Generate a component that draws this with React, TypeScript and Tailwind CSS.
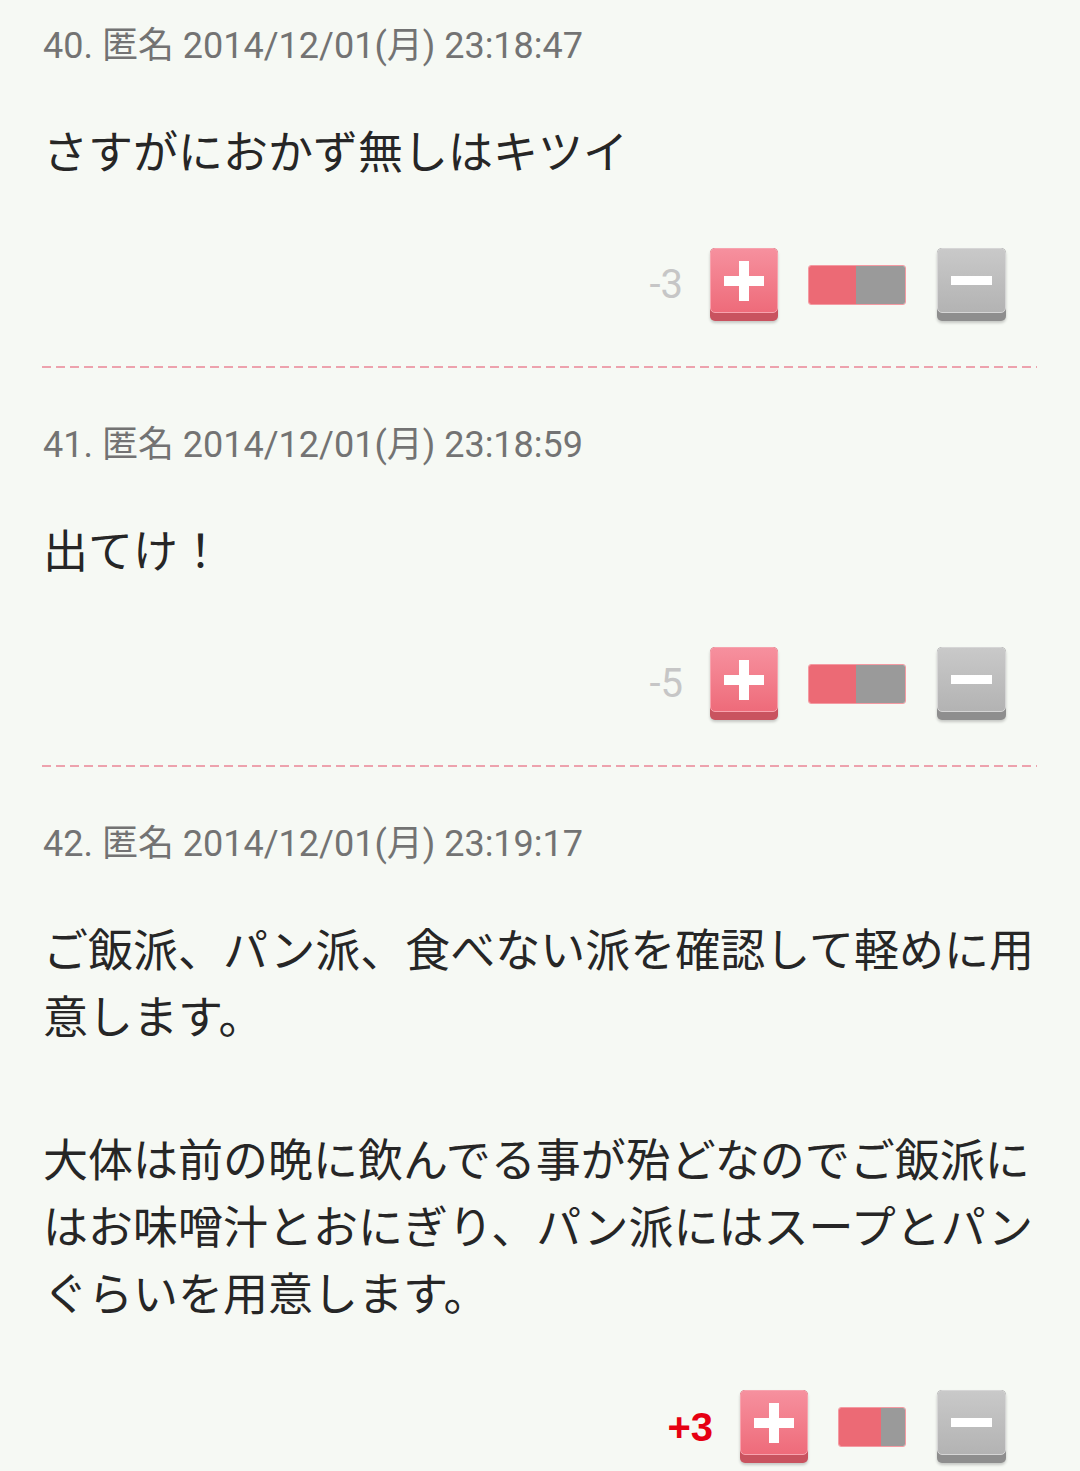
const posts = [
  {
    no: 40,
    time: "2014/12/01(月) 23:18:47",
    body: ["さすがにおかず無しはキツイ"],
    score: "-3",
    plus: false,
  },
  {
    no: 41,
    time: "2014/12/01(月) 23:18:59",
    body: ["出てけ！"],
    score: "-5",
    plus: false,
  },
  {
    no: 42,
    time: "2014/12/01(月) 23:19:17",
    body: [
      "ご飯派、パン派、食べない派を確認して軽めに用意します。",
      "大体は前の晩に飲んでる事が殆どなのでご飯派にはお味噌汁とおにぎり、パン派にはスープとパンぐらいを用意します。",
    ],
    score: "+3",
    plus: true,
  },
];

const PlusButton = () => (
  <div className="w-[68px] h-[73px] rounded-[5px] bg-[#c9535f] pb-[8px] shadow-[0_2px_3px_rgba(0,0,0,0.2)]">
    <div className="h-full rounded-[5px] border border-[#f7a3ae] bg-gradient-to-b from-[#f6909e] to-[#ee6b7a] flex items-center justify-center">
      <svg width="40" height="40" viewBox="0 0 40 40">
        <rect x="0" y="15" width="40" height="10" fill="#fff" />
        <rect x="15" y="0" width="10" height="40" fill="#fff" />
      </svg>
    </div>
  </div>
);

const MinusButton = () => (
  <div className="w-[69px] h-[73px] rounded-[5px] bg-[#8e8e8e] pb-[8px] shadow-[0_2px_3px_rgba(0,0,0,0.2)]">
    <div className="h-full rounded-[5px] border border-[#d6d6d6] bg-gradient-to-b from-[#c9c9c9] to-[#b3b3b3] flex items-center justify-center">
      <svg width="41" height="10" viewBox="0 0 41 10">
        <rect x="0" y="0" width="41" height="9" fill="#fff" />
      </svg>
    </div>
  </div>
);

const Post = ({ p, last }: { p: (typeof posts)[number]; last: boolean }) => (
  <div className={last ? "" : "pb-[57px]"}>
    <div className="h-[40px] leading-[40px] text-[36px] text-[#737373] font-['Roboto','Noto_Sans_CJK_JP',sans-serif]">
      {p.no}. 匿名 {p.time}
    </div>
    <div className="mt-[50px] text-[45px] leading-[67px] text-[#262626] font-['Noto_Sans_CJK_JP',sans-serif]">
      {p.body.map((t, i) => (
        <p key={i} className={i > 0 ? "mt-[76px]" : ""}>
          {t}
        </p>
      ))}
    </div>
    <div className="mt-[65px] flex items-center justify-end pr-[31px]">
      {p.plus ? (
        <span className="mr-[27px] text-[40px] font-bold text-[#e60012] font-['Liberation_Sans',sans-serif]">
          {p.score}
        </span>
      ) : (
        <span className="mr-[27px] text-[40px] font-normal text-[#c6c6c6] font-['Roboto',sans-serif]">
          {p.score}
        </span>
      )}
      <PlusButton />
      <div
        className={
          "ml-[30px] mr-[31px] h-[40px] flex rounded-[3px] overflow-hidden border border-[#f49aa2] " +
          (p.plus ? "w-[68px]" : "w-[98px]")
        }
      >
        <div className={"h-full bg-[#ec6a75] " + (p.plus ? "w-[42px]" : "w-[47px]")} />
        <div className="h-full flex-1 bg-[#9a9a9a]" />
      </div>
      <MinusButton />
    </div>
    {!last && (
      <div className="mt-[45px] -ml-[1px] h-[2px] bg-[image:repeating-linear-gradient(to_right,#eda2ad_0,#eda2ad_9px,transparent_9px,transparent_14px)]" />
    )}
  </div>
);

export default function App() {
  return (
    <div className="min-h-[1471px] w-[1080px] bg-[#f6f9f4] pl-[43px] pr-[43px] pt-[26px]">
      {posts.map((p, i) => (
        <Post key={p.no} p={p} last={i === posts.length - 1} />
      ))}
    </div>
  );
}
